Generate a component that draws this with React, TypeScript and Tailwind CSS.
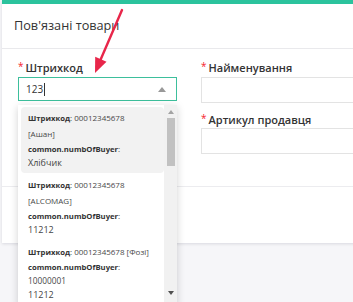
const items = [
  { first: "00012345678", extra: "[Ашан]", values: ["Хлібчик"], big: true },
  { first: "00012345678", extra: "[ALCOMAG]", values: ["11212"], big: true },
  { first: "00012345678 [Фозі]", extra: null, values: ["10000001", "11212"], big: false },
];

const Label = ({ text }: { text: string }) => (
  <div className="h-[17px] leading-[17px] flex items-start text-[11px] font-semibold text-[#333]">
    <span className="text-[#f5222d] text-[10px] leading-[12px] mr-[2px] mt-[1px] font-normal">*</span>
    {text}
  </div>
);

const App = () => {
  return (
    <div className="w-[353px] h-[302px] bg-[#f6f6f9] overflow-hidden relative font-['Open_Sans',sans-serif]">
      <div className="ml-[2px] w-[420px] bg-white border-t-4 border-[#2bc39d] shadow-[0_1px_3px_rgba(0,0,40,0.12)]">
        <div className="h-[45px] px-[12px] flex items-center border-b border-[#e9e9ec] text-[12.7px] text-[#333]">
          Пов'язані товари
        </div>
        <div className="pt-[10px] pb-[32px] px-[16px] grid grid-cols-[159px_1fr] gap-x-[24px] border-b border-[#ececef]">
          <div className="flex flex-col">
            <Label text="Штрихкод" />
            <div className="mt-[1px] h-[24px] border border-[#3dbf9c] flex items-center px-[7px] text-[10px] text-[#333]">
              <span>123</span>
              <span className="w-px h-[13px] bg-[#333] ml-[1px]"></span>
              <span className="ml-auto mr-[3px] w-0 h-0 border-x-[4px] border-x-transparent border-b-[5px] border-b-[#999]"></span>
            </div>
          </div>
          <div className="flex flex-col">
            <Label text="Найменування" />
            <div className="mt-[1px] h-[26px] border border-[#e3e3e3]"></div>
            <div className="mt-[8px]">
              <Label text="Артикул продавця" />
            </div>
            <div className="h-[26px] border border-[#e3e3e3]"></div>
          </div>
        </div>
        <div className="h-[56px]"></div>
      </div>

      <div className="absolute left-[18px] top-[105px] w-[159px] h-[200px] bg-white shadow-[0_2px_8px_rgba(0,0,0,0.18)] flex">
        <div className="flex-1 pl-[3px] pt-[2px] flex flex-col gap-[1px]">
          {items.map((it, i) => (
            <div
              key={i}
              className={`px-[7px] py-[3px] rounded-[4px] text-[8px] text-[#484848] ${i === 0 ? "bg-[#f2f2f2]" : ""}`}
            >
              <div className="h-[16px] leading-[16px] whitespace-nowrap">
                <span className="font-bold text-[7.7px] text-[#333]">Штрихкод</span>: {it.first}
              </div>
              {it.extra && <div className="h-[16px] leading-[16px]">{it.extra}</div>}
              <div className="h-[14px] leading-[14px]">
                <span className="font-bold text-[7.7px] text-[#333]">common.numbOfBuyer</span>:
              </div>
              {it.values.map((v, j) => (
                <div
                  key={j}
                  className={`h-[14px] leading-[14px] ${it.big || j === 1 ? "text-[9px] text-[#444]" : "text-[8.3px]"}`}
                >
                  {v}
                </div>
              ))}
            </div>
          ))}
        </div>
        <div className="w-[13px] bg-[#f1f1f1] flex flex-col items-center">
          <span className="mt-[5px] w-0 h-0 border-x-[3.5px] border-x-transparent border-b-[4px] border-b-[#a3a3a3]"></span>
          <div className="mt-[4px] w-[8px] h-[48px] bg-[#c1c1c1]"></div>
          <span className="mt-auto mb-[10px] w-0 h-0 border-x-[3.5px] border-x-transparent border-t-[4px] border-t-[#505050]"></span>
        </div>
      </div>

      <svg className="absolute left-0 top-0" width="353" height="302" viewBox="0 0 353 302">
        <line x1="122" y1="10" x2="100" y2="61" stroke="#e8264a" strokeWidth="2.4" strokeLinecap="round" />
        <polygon points="95,73 106.5,61.8 95.2,56.8" fill="#e8264a" />
      </svg>
    </div>
  );
};

export default App;
